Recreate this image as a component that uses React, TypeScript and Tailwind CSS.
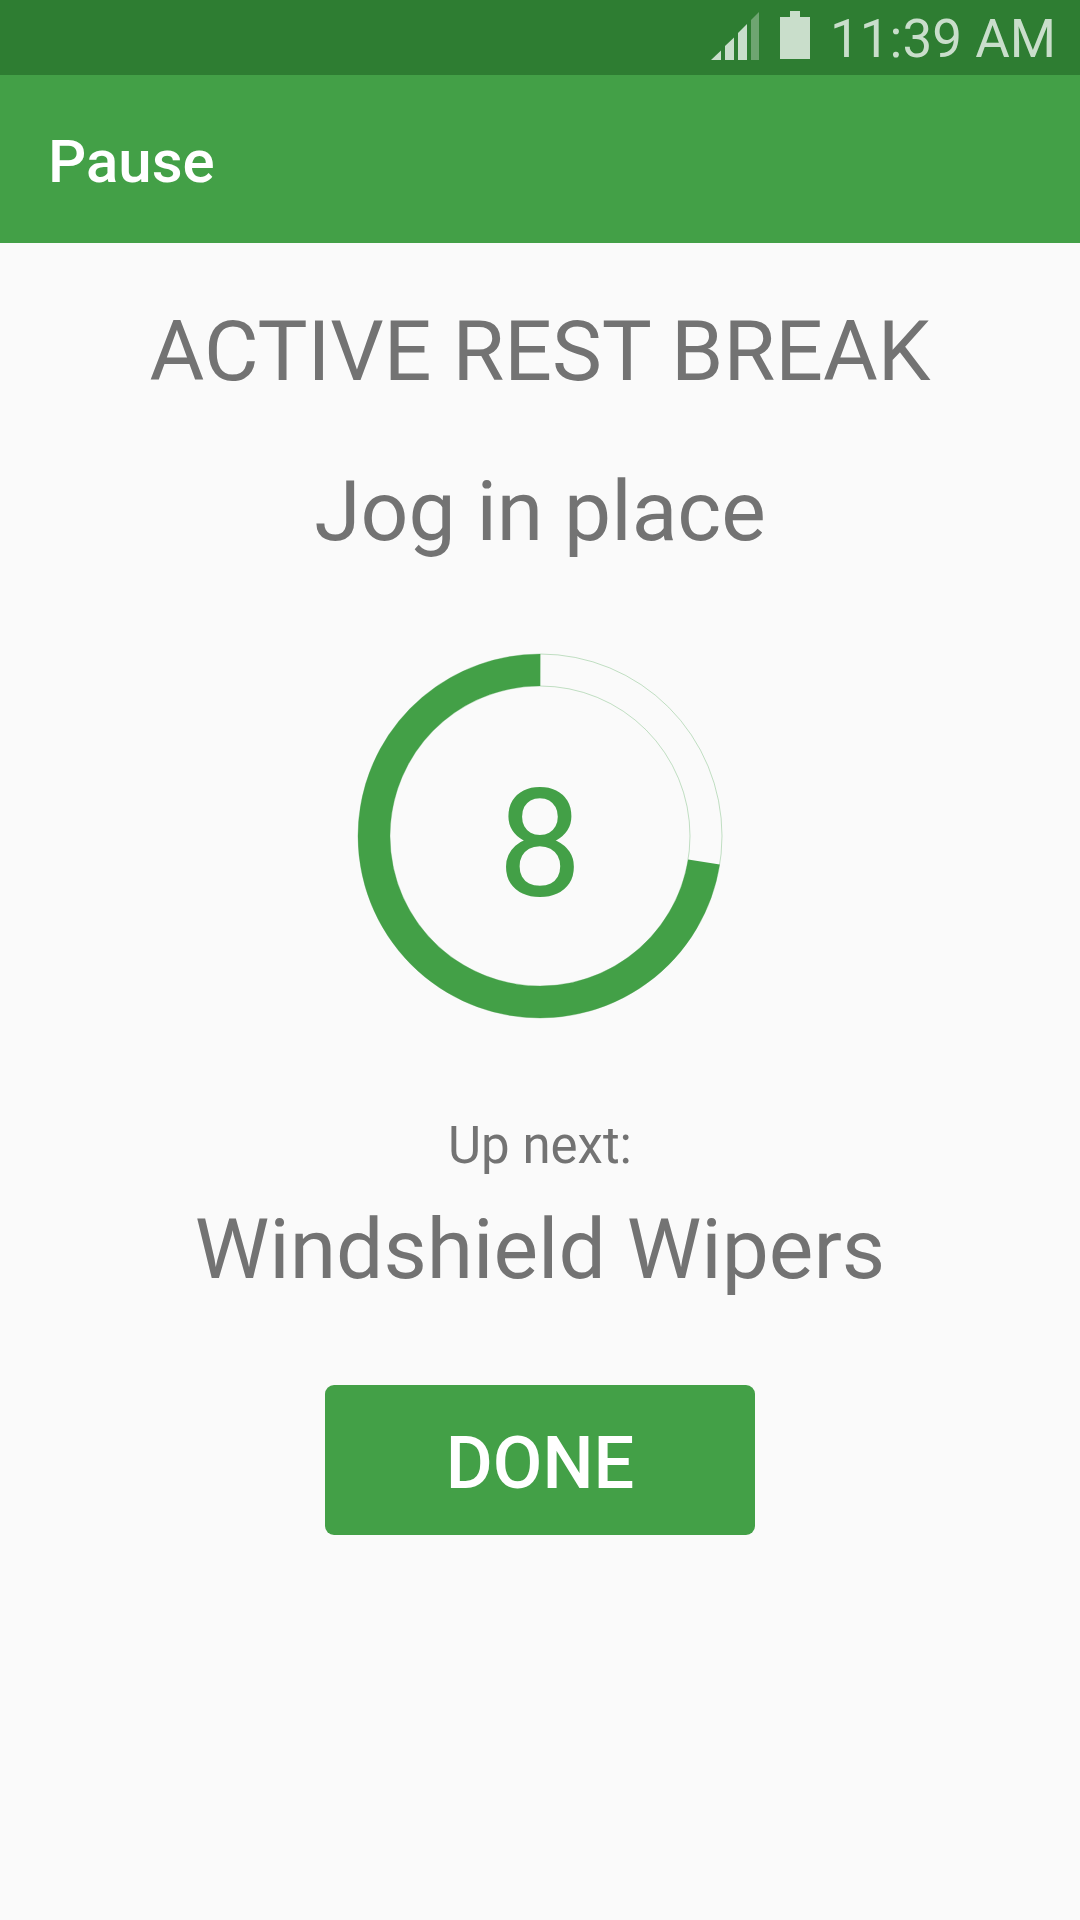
import React from 'react'

const RADIUS = 166
const CIRCUMFERENCE = 2 * Math.PI * RADIUS

function StatusBar() {
    return (
        <div className="flex h-[75px] items-center justify-end bg-[#2e7d32] pr-6 text-[#c9decb]">
            <svg width="48" height="48" viewBox="0 0 48 48" className="mr-[21px] mb-1 shrink-0" fill="currentColor" aria-hidden="true">
                <path d="M0 48L10 38.5V48Z" />
                <path d="M14 48V34L23 25.5V48Z" />
                <path d="M27 48V21L36 12V48Z" />
                <path d="M40 48V8L48 0V48Z" fill="#6ea571" />
            </svg>
            <svg width="30" height="48" viewBox="0 0 30 48" className="mr-5 mb-[5px] shrink-0" fill="currentColor" aria-hidden="true">
                <path d="M10 0H20V6H30V48H0V6H10Z" />
            </svg>
            <span className="pt-[3px] text-[53px] leading-[64px]">11:39 AM</span>
        </div>
    )
}

interface CountdownProps {
    seconds: number
    elapsed: number // fraction of the ring already used up
}

function Countdown({ seconds, elapsed }: CountdownProps) {
    return (
        <div className="grid size-[364px] place-items-center" role="timer">
            <svg viewBox="0 0 364 364" className="col-start-1 row-start-1 size-full overflow-visible" fill="none" aria-hidden="true">
                <circle cx="182" cy="182" r="182" stroke="#43a047" strokeOpacity="0.4" strokeWidth="0.8" />
                <circle cx="182" cy="182" r="150" stroke="#43a047" strokeOpacity="0.4" strokeWidth="0.8" />
                <circle
                    cx="182"
                    cy="182"
                    r={RADIUS}
                    stroke="#43a047"
                    strokeWidth="32"
                    strokeDasharray={`${CIRCUMFERENCE * (1 - elapsed)} ${CIRCUMFERENCE}`}
                    transform={`rotate(${elapsed * 360 - 90} 182 182)`}
                />
            </svg>
            <span className="col-start-1 row-start-1 pt-[18px] text-[150px] leading-[176px] text-[#43a047]">{seconds}</span>
        </div>
    )
}

export default function App() {
    return (
        <div className="flex min-h-screen flex-col bg-[#fafafa] font-['Roboto',sans-serif] text-[#737373]">
            <StatusBar />
            <header className="flex h-[168px] items-center bg-[#43a047] px-12 pt-[6px]">
                <h1 className="text-[60px] leading-[70px] font-medium text-white">Pause</h1>
            </header>

            <main className="flex flex-1 flex-col items-center pt-[59px] text-center">
                <h2 className="text-[84px] leading-[100px]">ACTIVE REST BREAK</h2>
                <p className="mt-[60px] mb-[92px] text-[84px] leading-[100px]">Jog in place</p>

                <Countdown seconds={8} elapsed={0.275} />

                <p className="mt-[98px] text-[51px] leading-[60px]">Up next:</p>
                <p className="mt-6 text-[84px] leading-[100px]">Windshield Wipers</p>

                <button
                    type="button"
                    className="mt-[85px] h-[150px] w-[430px] rounded-[9px] bg-[#43a047] pt-2 text-[72px] leading-[84px] font-medium text-white"
                >
                    DONE
                </button>
            </main>
        </div>
    )
}
